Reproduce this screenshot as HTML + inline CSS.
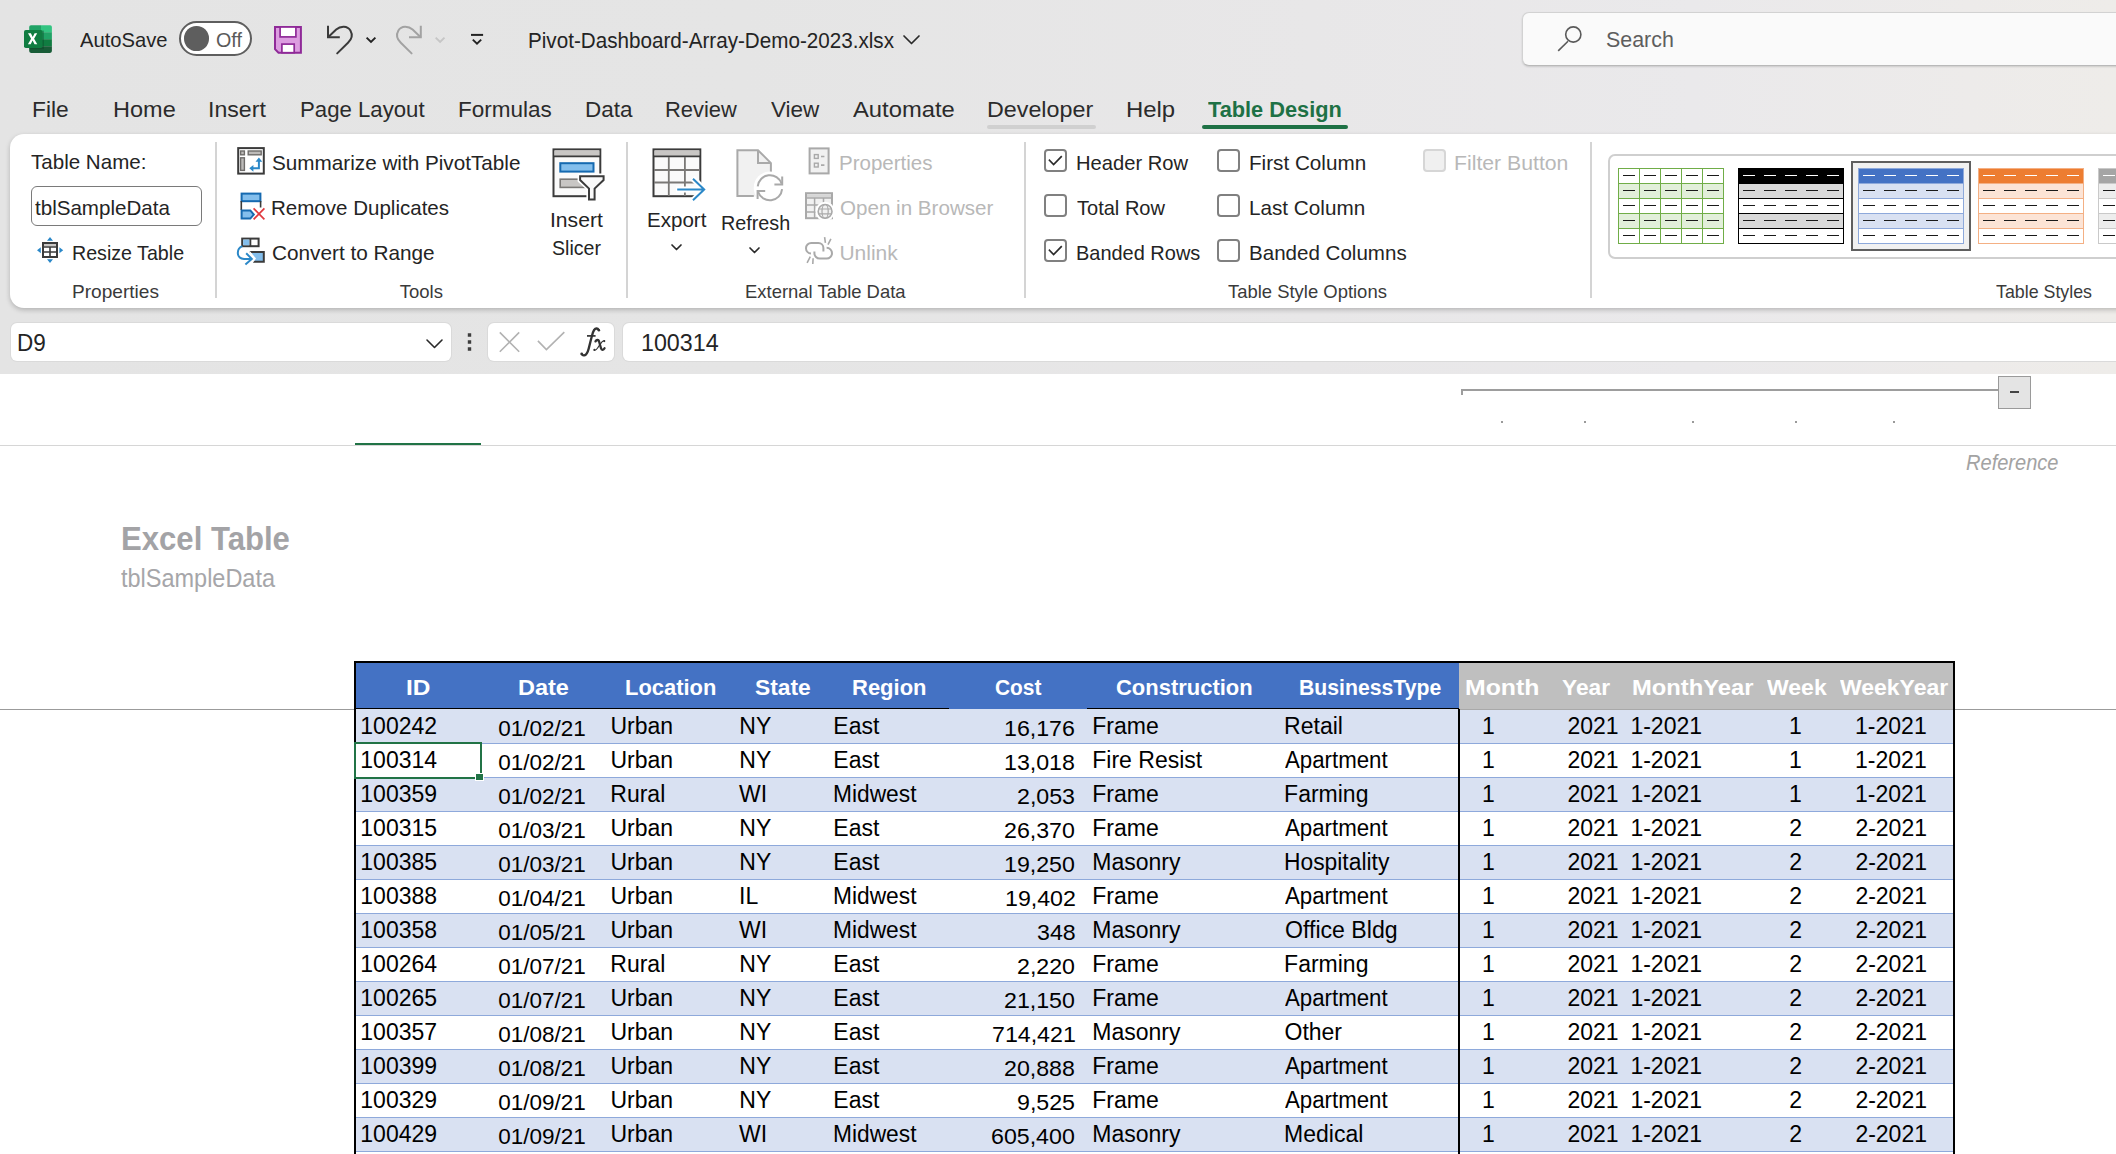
<!DOCTYPE html>
<html>
<head>
<meta charset="utf-8">
<title>Pivot-Dashboard-Array-Demo-2023.xlsx - Excel</title>
<style>
html,body{margin:0;padding:0;}
body{width:2116px;height:1154px;overflow:hidden;position:relative;background:#fff;font-family:"Liberation Sans",sans-serif;}
.a{position:absolute;}
.t{position:absolute;white-space:nowrap;transform-origin:0 0;font-family:"Liberation Sans",sans-serif;}
svg{position:absolute;overflow:visible;}
.sep{position:absolute;top:142px;height:156px;width:2px;background:#d4d4d4;}
.cb{position:absolute;width:19px;height:19px;border:2px solid #808080;border-radius:4px;background:#fff;}
.cbd{position:absolute;width:19px;height:19px;border:2px solid #d6d6d6;border-radius:4px;background:#f0f0f0;}
.band{position:absolute;left:356px;width:1597px;height:33px;background:#d9e1f2;}
.rl{position:absolute;left:356px;width:1597px;height:1px;background:#8ea9db;}
</style>
</head>
<body>
<div class="a" style="left:0;top:0;width:2116px;height:374px;background:linear-gradient(90deg,#e4e4e4 0%,#e5e5e5 35%,#e8e7e8 62%,#eae9eb 80%,#edebea 93%,#eeece9 100%);"></div><svg style="left:24px;top:25px" width="28" height="28" viewBox="0 0 28 28">
<defs><clipPath id="lg"><rect x="5.2" y="0.2" width="22.7" height="27.7" rx="1.8"/></clipPath></defs>
<g clip-path="url(#lg)">
<rect x="5" y="0" width="12" height="7.2" fill="#21a366"/><rect x="17" y="0" width="11" height="7.2" fill="#33c481"/>
<rect x="5" y="7.2" width="12" height="7" fill="#107c41"/><rect x="17" y="7.2" width="11" height="7" fill="#21a366"/>
<rect x="5" y="14.2" width="12" height="7" fill="#185c37"/><rect x="17" y="14.2" width="11" height="7" fill="#107c41"/>
<rect x="5" y="21.2" width="23" height="7" fill="#185c37"/>
<rect x="5" y="5.6" width="15" height="18.6" fill="#0a3d22" opacity="0.35"/>
</g>
<rect x="0" y="5" width="18.5" height="18" rx="1.8" fill="#107c41"/>
<path d="M4 8.2 L6.9 8.2 L8.7 11.9 L10.6 8.2 L13.2 8.2 L10.1 13.7 L13.3 19.3 L10.5 19.3 L8.6 15.5 L6.7 19.3 L3.9 19.3 L7.1 13.7 Z" fill="#fff"/>
</svg><div class="t" style="left:80.40px;top:29px;font-size:21px;line-height:21px;color:#242424;transform:scaleX(0.9602);">AutoSave</div><div class="a" style="left:179px;top:21px;width:69px;height:31px;border:2px solid #5e5e5e;border-radius:18px;background:#fff;"></div><div class="a" style="left:184.1px;top:26.2px;width:24.6px;height:24.6px;border-radius:50%;background:#5e5e5e;"></div><div class="t" style="left:215.91px;top:30px;font-size:20px;line-height:20px;color:#5a5a5a;transform:scaleX(0.9862);">Off</div><svg style="left:270px;top:22px" width="36" height="36" viewBox="270 22 36 36">
<path d="M275 27 H300.9 V52.7 H278.5 L275 49.1 Z" fill="#dc9de0" stroke="#8f2a98" stroke-width="2" stroke-linejoin="miter"/>
<rect x="280.1" y="27" width="15.8" height="9.9" fill="#fff" stroke="#8f2a98" stroke-width="1.7"/>
<rect x="281.9" y="44.1" width="12.3" height="8.6" fill="#fff" stroke="#8f2a98" stroke-width="1.7"/>
</svg><svg style="left:320px;top:20px" width="170" height="40" viewBox="320 20 170 40" fill="none" stroke-linecap="butt" stroke-linejoin="miter">
<g stroke="#3a3a3a" stroke-width="2"><path d="M328 25.8 V37.3 H339.8"/><path d="M328.6 36.7 L336.2 29.6 C340.5 25.6 347.5 25.6 350.4 30.4 C352.8 34.6 351.4 39.4 348 42.7 L337.2 53.4" stroke-linecap="round"/></g>
<path d="M366.6 37.6 L371 42 L375.4 37.6" stroke="#222" stroke-width="1.9"/>
<g stroke="#a2a2a2" stroke-width="2"><path d="M420.8 25.8 V37.3 H409"/><path d="M420.2 36.7 L412.6 29.6 C408.3 25.6 401.3 25.6 398.4 30.4 C396 34.6 397.4 39.4 400.8 42.7 L411.6 53.4" stroke-linecap="round"/></g>
<path d="M435.7 37.6 L440.1 42 L444.5 37.6" stroke="#c6c6c6" stroke-width="1.9"/>
<path d="M471 34.9 H483.1" stroke="#222" stroke-width="2"/><path d="M472.8 39.6 L477 43.6 L481.2 39.6" stroke="#222" stroke-width="1.9"/>
</svg><div class="t" style="left:528.17px;top:31px;font-size:21.5px;line-height:21.5px;color:#242424;transform:scaleX(0.9602);">Pivot-Dashboard-Array-Demo-2023.xlsx</div><svg style="left:903px;top:35px" width="17" height="10" viewBox="0 0 17 10" fill="none" stroke="#2a2a2a" stroke-width="1.7" stroke-linecap="round" stroke-linejoin="round"><path d="M1 1 L8.5 8.5 L16 1"/></svg><div class="a" style="left:1522px;top:12px;width:640px;height:52px;border-radius:7px;background:#fafafa;border:1px solid #d2d2d2;border-bottom-color:#b9b9b9;box-shadow:0 1px 2px rgba(0,0,0,0.14);"></div><svg style="left:1550px;top:20px" width="36" height="36" viewBox="1550 20 36 36" fill="none" stroke="#5a5a5a" stroke-width="1.6" stroke-linecap="butt"><circle cx="1573.3" cy="34.5" r="7.6"/><path d="M1568 41.3 L1558.2 50.9"/></svg><div class="t" style="left:1606.02px;top:29px;font-size:22px;line-height:22px;color:#5e5e5e;transform:scaleX(0.9723);">Search</div><div class="t" style="left:31.84px;top:99px;font-size:22px;line-height:22px;color:#2b2b2b;transform:scaleX(1.0332);">File</div><div class="t" style="left:112.58px;top:99px;font-size:22px;line-height:22px;color:#2b2b2b;transform:scaleX(1.0688);">Home</div><div class="t" style="left:207.60px;top:99px;font-size:22px;line-height:22px;color:#2b2b2b;transform:scaleX(1.0509);">Insert</div><div class="t" style="left:299.88px;top:99px;font-size:22px;line-height:22px;color:#2b2b2b;transform:scaleX(1.0088);">Page Layout</div><div class="t" style="left:457.96px;top:99px;font-size:22px;line-height:22px;color:#2b2b2b;transform:scaleX(1.0226);">Formulas</div><div class="t" style="left:584.96px;top:99px;font-size:22px;line-height:22px;color:#2b2b2b;transform:scaleX(1.0216);">Data</div><div class="t" style="left:665.41px;top:99px;font-size:22px;line-height:22px;color:#2b2b2b;transform:scaleX(0.9951);">Review</div><div class="t" style="left:771.00px;top:99px;font-size:22px;line-height:22px;color:#2b2b2b;transform:scaleX(1.0211);">View</div><div class="t" style="left:853.00px;top:99px;font-size:22px;line-height:22px;color:#2b2b2b;transform:scaleX(1.0801);">Automate</div><div class="t" style="left:987.49px;top:99px;font-size:22px;line-height:22px;color:#2b2b2b;transform:scaleX(1.0586);">Developer</div><div class="t" style="left:1125.74px;top:99px;font-size:22px;line-height:22px;color:#2b2b2b;transform:scaleX(1.0866);">Help</div><div class="t" style="left:1208.20px;top:99px;font-size:22px;line-height:22px;color:#1e7145;font-weight:bold;transform:scaleX(0.9892);">Table Design</div><div class="a" style="left:987px;top:125px;width:109px;height:3.6px;border-radius:2px;background:#d0d0d0;"></div><div class="a" style="left:1202px;top:125px;width:146px;height:3.7px;border-radius:2px;background:#1e7145;"></div><div class="a" style="left:10px;top:134px;width:2200px;height:174px;border-radius:14px;background:#fff;box-shadow:0 2px 5px rgba(0,0,0,0.22);"></div><div class="sep" style="left:214.5px"></div><div class="sep" style="left:625.5px"></div><div class="sep" style="left:1023.5px"></div><div class="sep" style="left:1589.5px"></div><div class="t" style="left:30.91px;top:151px;font-size:21px;line-height:21px;color:#242424;transform:scaleX(0.9788);">Table Name:</div><div class="a" style="left:31px;top:186px;width:169px;height:38px;border:1.5px solid #7a7a7a;border-radius:6px;background:#fff;"></div><div class="t" style="left:35.31px;top:197px;font-size:21px;line-height:21px;color:#242424;transform:scaleX(0.9792);">tblSampleData</div><div class="t" style="left:71.81px;top:242px;font-size:21px;line-height:21px;color:#242424;transform:scaleX(0.9350);">Resize Table</div><div class="t" style="left:72.45px;top:283px;font-size:18.5px;line-height:18.5px;color:#3a3a3a;transform:scaleX(1.0308);">Properties</div><div class="t" style="left:271.71px;top:152px;font-size:21px;line-height:21px;color:#242424;transform:scaleX(0.9856);">Summarize with PivotTable</div><div class="t" style="left:270.94px;top:197px;font-size:21px;line-height:21px;color:#242424;transform:scaleX(0.9779);">Remove Duplicates</div><div class="t" style="left:271.61px;top:242px;font-size:21px;line-height:21px;color:#242424;transform:scaleX(0.9882);">Convert to Range</div><div class="t" style="left:399.80px;top:283px;font-size:18.5px;line-height:18.5px;color:#3a3a3a;">Tools</div><div class="t" style="left:550.39px;top:209px;font-size:21px;line-height:21px;color:#242424;transform:scaleX(1.0062);">Insert</div><div class="t" style="left:551.86px;top:237px;font-size:21px;line-height:21px;color:#242424;transform:scaleX(0.9315);">Slicer</div><div class="t" style="left:647.04px;top:209px;font-size:21px;line-height:21px;color:#242424;transform:scaleX(0.9786);">Export</div><div class="t" style="left:721.00px;top:212px;font-size:21px;line-height:21px;color:#242424;transform:scaleX(0.9412);">Refresh</div><div class="t" style="left:839.34px;top:152px;font-size:21px;line-height:21px;color:#b8b8b8;transform:scaleX(0.9774);">Properties</div><div class="t" style="left:840.12px;top:197px;font-size:21px;line-height:21px;color:#b8b8b8;transform:scaleX(0.9806);">Open in Browser</div><div class="t" style="left:839.40px;top:242px;font-size:21px;line-height:21px;color:#b8b8b8;">Unlink</div><div class="t" style="left:744.51px;top:283px;font-size:18.5px;line-height:18.5px;color:#3a3a3a;transform:scaleX(0.9965);">External Table Data</div><div class="t" style="left:1075.57px;top:152px;font-size:21px;line-height:21px;color:#242424;transform:scaleX(0.9596);">Header Row</div><div class="t" style="left:1076.82px;top:197px;font-size:21px;line-height:21px;color:#242424;transform:scaleX(0.9539);">Total Row</div><div class="t" style="left:1075.58px;top:242px;font-size:21px;line-height:21px;color:#242424;transform:scaleX(0.9505);">Banded Rows</div><div class="t" style="left:1248.53px;top:152px;font-size:21px;line-height:21px;color:#242424;transform:scaleX(0.9842);">First Column</div><div class="t" style="left:1248.53px;top:197px;font-size:21px;line-height:21px;color:#242424;transform:scaleX(0.9851);">Last Column</div><div class="t" style="left:1248.54px;top:242px;font-size:21px;line-height:21px;color:#242424;transform:scaleX(0.9786);">Banded Columns</div><div class="t" style="left:1228.00px;top:283px;font-size:18.5px;line-height:18.5px;color:#3a3a3a;transform:scaleX(0.9966);">Table Style Options</div><div class="t" style="left:1454.28px;top:152px;font-size:21px;line-height:21px;color:#b8b8b8;transform:scaleX(1.0106);">Filter Button</div><div class="t" style="left:1996.31px;top:283px;font-size:18.5px;line-height:18.5px;color:#3a3a3a;transform:scaleX(0.9626);">Table Styles</div><div class="cb" style="left:1044px;top:149px"></div><svg style="left:1044px;top:149px" width="23" height="23" viewBox="0 0 23 23" fill="none" stroke="#2b2b2b" stroke-width="1.7" stroke-linecap="square" stroke-linejoin="miter"><path d="M5.5 11.3 L9.6 15.5 L17.2 7.7"/></svg><div class="cb" style="left:1044px;top:194px"></div><div class="cb" style="left:1044px;top:239px"></div><svg style="left:1044px;top:239px" width="23" height="23" viewBox="0 0 23 23" fill="none" stroke="#2b2b2b" stroke-width="1.7" stroke-linecap="square" stroke-linejoin="miter"><path d="M5.5 11.3 L9.6 15.5 L17.2 7.7"/></svg><div class="cb" style="left:1217px;top:149px"></div><div class="cb" style="left:1217px;top:194px"></div><div class="cb" style="left:1217px;top:239px"></div><div class="cbd" style="left:1423px;top:149px"></div><svg style="left:671px;top:244px" width="11" height="7" viewBox="0 0 11 7" fill="none" stroke="#2a2a2a" stroke-width="1.7" stroke-linecap="round" stroke-linejoin="round"><path d="M1 1 L5.5 5.5 L10 1"/></svg><svg style="left:749px;top:246.5px" width="11" height="7" viewBox="0 0 11 7" fill="none" stroke="#2a2a2a" stroke-width="1.7" stroke-linecap="round" stroke-linejoin="round"><path d="M1 1 L5.5 5.5 L10 1"/></svg><svg style="left:0;top:130px" width="1100" height="150" viewBox="0 130 1100 150" fill="none"><rect x="43" y="243" width="14" height="14" fill="#fff" stroke="#3b3b3b" stroke-width="2"/><rect x="44" y="244" width="12" height="2.2" fill="#c8c6c4"/><path d="M43 247 H57 M43 252 H57 M50 247 V257" stroke="#3b3b3b" stroke-width="1.6"/><path d="M50 237 L53 240.7 H47 Z M50 263 L53 259.3 H47 Z M37 250.2 L40.8 247.2 V253.2 Z M63.2 250.2 L59.4 247.2 V253.2 Z" fill="#2b88c8"/><rect x="238.2" y="148.1" width="25.6" height="25.5" fill="#fff" stroke="#3b3b3b" stroke-width="2"/><rect x="240.6" y="151" width="3.8" height="3.8" fill="#bdbbb9" stroke="#6e6c6a" stroke-width="1.4"/><rect x="248.2" y="151" width="13" height="3.8" fill="#bdbbb9" stroke="#6e6c6a" stroke-width="1.4"/><rect x="240.6" y="157.8" width="3.8" height="12.6" fill="#bdbbb9" stroke="#6e6c6a" stroke-width="1.4"/><path d="M251.5 168.3 H258.9 V160" stroke="#2b88c8" stroke-width="2"/><path d="M253.4 164.9 L249.3 168.3 L253.4 171.7 Z M255.5 161.8 L258.9 157.6 L262.3 161.8 Z" fill="#2b88c8"/><rect x="241.6" y="193.6" width="18.8" height="7.6" fill="#83beec" stroke="#1569b0" stroke-width="2"/><path d="M241.3 201 V210 M260.6 201 V207.5" stroke="#3b3b3b" stroke-width="1.6"/><path d="M241.6 210.4 H250.3 L253.8 214.6 L250.3 218.6 H241.6 Z" fill="#83beec" stroke="#1569b0" stroke-width="2"/><path d="M253.6 208.4 L264.4 219.4 M264.4 208.4 L253.6 219.4" stroke="#e0393e" stroke-width="1.7"/><rect x="242.2" y="238.6" width="16.4" height="7.6" fill="#fff" stroke="#3b3b3b" stroke-width="2"/><rect x="243.2" y="239.6" width="6.3" height="5.6" fill="#83beec"/><path d="M250.4 238.6 V246.2" stroke="#3b3b3b" stroke-width="1.8"/><path d="M251.2 252 H263.8 V261.8 H254" fill="#83beec"/><path d="M249.8 252 H263.8 V261.8 H253" stroke="#3b3b3b" stroke-width="2" /><path d="M249.8 251 L256 258.5 L253 262.8 L249.8 262.8Z" fill="#fff"/><path d="M242.3 246.2 C236 249 236.2 258.6 244 258.9 H251" stroke="#2b88c8" stroke-width="2"/><path d="M246.2 253.3 L251.8 258.9 L245.4 264.4" stroke="#2b88c8" stroke-width="2"/><rect x="553.5" y="149.4" width="46.8" height="46.8" fill="#fafafa" stroke="#3b3b3b" stroke-width="2"/><rect x="554.5" y="150.4" width="44.8" height="5.6" fill="#c8c6c4"/><path d="M553.5 156.4 H600.3" stroke="#3b3b3b" stroke-width="1.8"/><rect x="560.3" y="163.2" width="33.2" height="8.4" fill="#83beec" stroke="#1569b0" stroke-width="2"/><rect x="560.2" y="179.2" width="26" height="8.2" fill="#c8c6c4" stroke="#7a7876" stroke-width="1.6"/><path d="M577.6 173.4 H606.4 V181.4 L597.4 189.4 V202.4 H586.4 V189.4 L577.6 181.4 Z" fill="#fff"/><rect x="596" y="186" width="7" height="13" fill="#fff"/><path d="M580.1 176.2 H603.6 V180 L594.6 188.6 V199.5 H589 V188.6 L580.1 180 Z" fill="#fafafa" stroke="#3b3b3b" stroke-width="2"/><rect x="653.5" y="149.4" width="46.8" height="46.8" fill="#fafafa" stroke="#3b3b3b" stroke-width="2"/><rect x="654.5" y="150.4" width="44.8" height="5.4" fill="#c8c6c4"/><path d="M653.5 156.3 H700.3" stroke="#3b3b3b" stroke-width="1.8"/><path d="M668.8 157 V196 M684.9 157 V196 M654 170 H700 M654 182.5 H700" stroke="#7a7876" stroke-width="1.8"/><path d="M676 189.6 H705.5 M692.4 178 L704.4 189.6 L692.4 201" stroke="#fff" stroke-width="6"/><rect x="696" y="186" width="12" height="14" fill="#fff"/><path d="M677.2 189.6 H703.8 M693 178.8 L704.2 189.6 L693 200.2" stroke="#2b88c8" stroke-width="2"/><path d="M737.4 150.2 H758 L770.9 163.1 V196.6 H737.4 Z" fill="#f1f1f1"/><path d="M753.8 196.1 H737.4 V150.2 H758 L770.9 163.1 V172" stroke="#a9a9a9" stroke-width="2"/><path d="M758 150.2 V163.1 H770.9" stroke="#a9a9a9" stroke-width="2"/><circle cx="769.9" cy="187.8" r="16.2" fill="#fff"/><path d="M757.7 186.4 A12.3 12.3 0 0 1 781.6 183.6" stroke="#a9a9a9" stroke-width="2"/><path d="M782.2 176.4 V184.4 H774.4" stroke="#a9a9a9" stroke-width="2"/><path d="M782.1 189.2 A12.3 12.3 0 0 1 758.2 192" stroke="#a9a9a9" stroke-width="2"/><path d="M757.6 198.9 V191.1 H765.2" stroke="#a9a9a9" stroke-width="2"/><rect x="809.6" y="148.4" width="19" height="25" fill="#f1f1f1" stroke="#a9a9a9" stroke-width="2"/><rect x="814.4" y="154.6" width="3.8" height="3.8" stroke="#a9a9a9" stroke-width="1.4"/><rect x="814.4" y="163.2" width="3.8" height="3.8" stroke="#a9a9a9" stroke-width="1.4"/><path d="M821 156.5 H824.4 M821 165.1 H824.4" stroke="#a9a9a9" stroke-width="1.6"/><rect x="806" y="193.2" width="26" height="25" fill="#f1f1f1" stroke="#a9a9a9" stroke-width="2"/><rect x="807" y="194.2" width="24" height="3.4" fill="#d6d6d6"/><path d="M806 198 H832 M814.6 198 V218 M806 205.1 H832 M806 212 H832 M823.5 198 V203" stroke="#a9a9a9" stroke-width="1.5"/><circle cx="825.1" cy="211.4" r="9.6" fill="#fff"/><circle cx="825.1" cy="211.4" r="6.9" fill="#f1f1f1" stroke="#a9a9a9" stroke-width="1.6"/><ellipse cx="825.1" cy="211.4" rx="3.1" ry="6.9" stroke="#a9a9a9" stroke-width="1.2"/><path d="M818.4 209 H831.8 M818.4 213.8 H831.8" stroke="#a9a9a9" stroke-width="1.2"/><path d="M823.4 251.6 V248 A5 5 0 0 0 818.4 243 H811.2 A5.2 5.2 0 0 0 806 248.2 A5.2 5.2 0 0 0 811 253.4" stroke="#a9a9a9" stroke-width="2"/><path d="M826.6 247.8 A5.4 5.4 0 0 1 826.6 258.6 H819.8 A5.4 5.4 0 0 1 814.4 253.2 V251.4" stroke="#a9a9a9" stroke-width="2"/><path d="M824.6 237.2 L825.4 242.9 M830.9 238.9 L828 244.6 M810.3 256.6 L807.1 262.9 M813.1 258.3 L812.8 264" stroke="#a9a9a9" stroke-width="1.6"/></svg><div class="a" style="left:1608px;top:154px;width:560px;height:100.6px;border:2px solid #cfcfcf;border-radius:7px;background:#fff;"></div><svg style="left:1618px;top:168px" width="106" height="76" viewBox="0 0 106 76" shape-rendering="crispEdges"><rect x="0" y="0" width="106" height="15" fill="#fff"/><rect x="0" y="15" width="106" height="15" fill="#e2efda"/><rect x="0" y="30" width="106" height="15" fill="#fff"/><rect x="0" y="45" width="106" height="15" fill="#e2efda"/><rect x="0" y="60" width="106" height="15" fill="#fff"/><rect x="0" y="0" width="106" height="1" fill="#70ad47"/><rect x="0" y="15" width="106" height="1" fill="#70ad47"/><rect x="0" y="30" width="106" height="1" fill="#70ad47"/><rect x="0" y="45" width="106" height="1" fill="#70ad47"/><rect x="0" y="60" width="106" height="1" fill="#70ad47"/><rect x="0" y="75" width="106" height="1" fill="#70ad47"/><rect x="0" y="0" width="1" height="76" fill="#70ad47"/><rect x="21" y="0" width="1" height="76" fill="#70ad47"/><rect x="42" y="0" width="1" height="76" fill="#70ad47"/><rect x="63" y="0" width="1" height="76" fill="#70ad47"/><rect x="84" y="0" width="1" height="76" fill="#70ad47"/><rect x="105" y="0" width="1" height="76" fill="#70ad47"/><rect x="5" y="7" width="12" height="1" fill="#1a1a1a"/><rect x="26" y="7" width="12" height="1" fill="#1a1a1a"/><rect x="47" y="7" width="12" height="1" fill="#1a1a1a"/><rect x="68" y="7" width="12" height="1" fill="#1a1a1a"/><rect x="89" y="7" width="12" height="1" fill="#1a1a1a"/><rect x="5" y="22" width="12" height="1" fill="#1a1a1a"/><rect x="26" y="22" width="12" height="1" fill="#1a1a1a"/><rect x="47" y="22" width="12" height="1" fill="#1a1a1a"/><rect x="68" y="22" width="12" height="1" fill="#1a1a1a"/><rect x="89" y="22" width="12" height="1" fill="#1a1a1a"/><rect x="5" y="37" width="12" height="1" fill="#1a1a1a"/><rect x="26" y="37" width="12" height="1" fill="#1a1a1a"/><rect x="47" y="37" width="12" height="1" fill="#1a1a1a"/><rect x="68" y="37" width="12" height="1" fill="#1a1a1a"/><rect x="89" y="37" width="12" height="1" fill="#1a1a1a"/><rect x="5" y="52" width="12" height="1" fill="#1a1a1a"/><rect x="26" y="52" width="12" height="1" fill="#1a1a1a"/><rect x="47" y="52" width="12" height="1" fill="#1a1a1a"/><rect x="68" y="52" width="12" height="1" fill="#1a1a1a"/><rect x="89" y="52" width="12" height="1" fill="#1a1a1a"/><rect x="5" y="67" width="12" height="1" fill="#1a1a1a"/><rect x="26" y="67" width="12" height="1" fill="#1a1a1a"/><rect x="47" y="67" width="12" height="1" fill="#1a1a1a"/><rect x="68" y="67" width="12" height="1" fill="#1a1a1a"/><rect x="89" y="67" width="12" height="1" fill="#1a1a1a"/></svg><svg style="left:1738px;top:168px" width="106" height="76" viewBox="0 0 106 76" shape-rendering="crispEdges"><rect x="0" y="0" width="106" height="15" fill="#000"/><rect x="0" y="15" width="106" height="15" fill="#d9d9d9"/><rect x="0" y="30" width="106" height="15" fill="#fff"/><rect x="0" y="45" width="106" height="15" fill="#d9d9d9"/><rect x="0" y="60" width="106" height="15" fill="#fff"/><rect x="0" y="0" width="106" height="1" fill="#000"/><rect x="0" y="15" width="106" height="1" fill="#000"/><rect x="0" y="30" width="106" height="1" fill="#000"/><rect x="0" y="45" width="106" height="1" fill="#000"/><rect x="0" y="60" width="106" height="1" fill="#000"/><rect x="0" y="75" width="106" height="1" fill="#000"/><rect x="0" y="0" width="1" height="76" fill="#000"/><rect x="105" y="0" width="1" height="76" fill="#000"/><rect x="5" y="7" width="12" height="1" fill="#fff"/><rect x="26" y="7" width="12" height="1" fill="#fff"/><rect x="47" y="7" width="12" height="1" fill="#fff"/><rect x="68" y="7" width="12" height="1" fill="#fff"/><rect x="89" y="7" width="12" height="1" fill="#fff"/><rect x="5" y="22" width="12" height="1" fill="#1a1a1a"/><rect x="26" y="22" width="12" height="1" fill="#1a1a1a"/><rect x="47" y="22" width="12" height="1" fill="#1a1a1a"/><rect x="68" y="22" width="12" height="1" fill="#1a1a1a"/><rect x="89" y="22" width="12" height="1" fill="#1a1a1a"/><rect x="5" y="37" width="12" height="1" fill="#1a1a1a"/><rect x="26" y="37" width="12" height="1" fill="#1a1a1a"/><rect x="47" y="37" width="12" height="1" fill="#1a1a1a"/><rect x="68" y="37" width="12" height="1" fill="#1a1a1a"/><rect x="89" y="37" width="12" height="1" fill="#1a1a1a"/><rect x="5" y="52" width="12" height="1" fill="#1a1a1a"/><rect x="26" y="52" width="12" height="1" fill="#1a1a1a"/><rect x="47" y="52" width="12" height="1" fill="#1a1a1a"/><rect x="68" y="52" width="12" height="1" fill="#1a1a1a"/><rect x="89" y="52" width="12" height="1" fill="#1a1a1a"/><rect x="5" y="67" width="12" height="1" fill="#1a1a1a"/><rect x="26" y="67" width="12" height="1" fill="#1a1a1a"/><rect x="47" y="67" width="12" height="1" fill="#1a1a1a"/><rect x="68" y="67" width="12" height="1" fill="#1a1a1a"/><rect x="89" y="67" width="12" height="1" fill="#1a1a1a"/></svg><div class="a" style="left:1851px;top:161px;width:116px;height:85.5px;border:2px solid #5f5f5f;background:#f1f1f1;"></div><svg style="left:1858px;top:168px" width="106" height="76" viewBox="0 0 106 76" shape-rendering="crispEdges"><rect x="0" y="0" width="106" height="15" fill="#4472c4"/><rect x="0" y="15" width="106" height="15" fill="#d9e1f2"/><rect x="0" y="30" width="106" height="15" fill="#fff"/><rect x="0" y="45" width="106" height="15" fill="#d9e1f2"/><rect x="0" y="60" width="106" height="15" fill="#fff"/><rect x="0" y="0" width="106" height="1" fill="#8ea9db"/><rect x="0" y="15" width="106" height="1" fill="#8ea9db"/><rect x="0" y="30" width="106" height="1" fill="#8ea9db"/><rect x="0" y="45" width="106" height="1" fill="#8ea9db"/><rect x="0" y="60" width="106" height="1" fill="#8ea9db"/><rect x="0" y="75" width="106" height="1" fill="#8ea9db"/><rect x="0" y="0" width="1" height="76" fill="#8ea9db"/><rect x="105" y="0" width="1" height="76" fill="#8ea9db"/><rect x="5" y="7" width="12" height="1" fill="#fff"/><rect x="26" y="7" width="12" height="1" fill="#fff"/><rect x="47" y="7" width="12" height="1" fill="#fff"/><rect x="68" y="7" width="12" height="1" fill="#fff"/><rect x="89" y="7" width="12" height="1" fill="#fff"/><rect x="5" y="22" width="12" height="1" fill="#1a1a1a"/><rect x="26" y="22" width="12" height="1" fill="#1a1a1a"/><rect x="47" y="22" width="12" height="1" fill="#1a1a1a"/><rect x="68" y="22" width="12" height="1" fill="#1a1a1a"/><rect x="89" y="22" width="12" height="1" fill="#1a1a1a"/><rect x="5" y="37" width="12" height="1" fill="#1a1a1a"/><rect x="26" y="37" width="12" height="1" fill="#1a1a1a"/><rect x="47" y="37" width="12" height="1" fill="#1a1a1a"/><rect x="68" y="37" width="12" height="1" fill="#1a1a1a"/><rect x="89" y="37" width="12" height="1" fill="#1a1a1a"/><rect x="5" y="52" width="12" height="1" fill="#1a1a1a"/><rect x="26" y="52" width="12" height="1" fill="#1a1a1a"/><rect x="47" y="52" width="12" height="1" fill="#1a1a1a"/><rect x="68" y="52" width="12" height="1" fill="#1a1a1a"/><rect x="89" y="52" width="12" height="1" fill="#1a1a1a"/><rect x="5" y="67" width="12" height="1" fill="#1a1a1a"/><rect x="26" y="67" width="12" height="1" fill="#1a1a1a"/><rect x="47" y="67" width="12" height="1" fill="#1a1a1a"/><rect x="68" y="67" width="12" height="1" fill="#1a1a1a"/><rect x="89" y="67" width="12" height="1" fill="#1a1a1a"/></svg><svg style="left:1978px;top:168px" width="106" height="76" viewBox="0 0 106 76" shape-rendering="crispEdges"><rect x="0" y="0" width="106" height="15" fill="#ed7d31"/><rect x="0" y="15" width="106" height="15" fill="#fce4d6"/><rect x="0" y="30" width="106" height="15" fill="#fff"/><rect x="0" y="45" width="106" height="15" fill="#fce4d6"/><rect x="0" y="60" width="106" height="15" fill="#fff"/><rect x="0" y="0" width="106" height="1" fill="#f4b084"/><rect x="0" y="15" width="106" height="1" fill="#f4b084"/><rect x="0" y="30" width="106" height="1" fill="#f4b084"/><rect x="0" y="45" width="106" height="1" fill="#f4b084"/><rect x="0" y="60" width="106" height="1" fill="#f4b084"/><rect x="0" y="75" width="106" height="1" fill="#f4b084"/><rect x="0" y="0" width="1" height="76" fill="#f4b084"/><rect x="105" y="0" width="1" height="76" fill="#f4b084"/><rect x="5" y="7" width="12" height="1" fill="#fff"/><rect x="26" y="7" width="12" height="1" fill="#fff"/><rect x="47" y="7" width="12" height="1" fill="#fff"/><rect x="68" y="7" width="12" height="1" fill="#fff"/><rect x="89" y="7" width="12" height="1" fill="#fff"/><rect x="5" y="22" width="12" height="1" fill="#1a1a1a"/><rect x="26" y="22" width="12" height="1" fill="#1a1a1a"/><rect x="47" y="22" width="12" height="1" fill="#1a1a1a"/><rect x="68" y="22" width="12" height="1" fill="#1a1a1a"/><rect x="89" y="22" width="12" height="1" fill="#1a1a1a"/><rect x="5" y="37" width="12" height="1" fill="#1a1a1a"/><rect x="26" y="37" width="12" height="1" fill="#1a1a1a"/><rect x="47" y="37" width="12" height="1" fill="#1a1a1a"/><rect x="68" y="37" width="12" height="1" fill="#1a1a1a"/><rect x="89" y="37" width="12" height="1" fill="#1a1a1a"/><rect x="5" y="52" width="12" height="1" fill="#1a1a1a"/><rect x="26" y="52" width="12" height="1" fill="#1a1a1a"/><rect x="47" y="52" width="12" height="1" fill="#1a1a1a"/><rect x="68" y="52" width="12" height="1" fill="#1a1a1a"/><rect x="89" y="52" width="12" height="1" fill="#1a1a1a"/><rect x="5" y="67" width="12" height="1" fill="#1a1a1a"/><rect x="26" y="67" width="12" height="1" fill="#1a1a1a"/><rect x="47" y="67" width="12" height="1" fill="#1a1a1a"/><rect x="68" y="67" width="12" height="1" fill="#1a1a1a"/><rect x="89" y="67" width="12" height="1" fill="#1a1a1a"/></svg><svg style="left:2098px;top:168px" width="106" height="76" viewBox="0 0 106 76" shape-rendering="crispEdges"><rect x="0" y="0" width="106" height="15" fill="#a5a5a5"/><rect x="0" y="15" width="106" height="15" fill="#ededed"/><rect x="0" y="30" width="106" height="15" fill="#fff"/><rect x="0" y="45" width="106" height="15" fill="#ededed"/><rect x="0" y="60" width="106" height="15" fill="#fff"/><rect x="0" y="0" width="106" height="1" fill="#c9c9c9"/><rect x="0" y="15" width="106" height="1" fill="#c9c9c9"/><rect x="0" y="30" width="106" height="1" fill="#c9c9c9"/><rect x="0" y="45" width="106" height="1" fill="#c9c9c9"/><rect x="0" y="60" width="106" height="1" fill="#c9c9c9"/><rect x="0" y="75" width="106" height="1" fill="#c9c9c9"/><rect x="0" y="0" width="1" height="76" fill="#c9c9c9"/><rect x="105" y="0" width="1" height="76" fill="#c9c9c9"/><rect x="5" y="7" width="12" height="1" fill="#fff"/><rect x="26" y="7" width="12" height="1" fill="#fff"/><rect x="47" y="7" width="12" height="1" fill="#fff"/><rect x="68" y="7" width="12" height="1" fill="#fff"/><rect x="89" y="7" width="12" height="1" fill="#fff"/><rect x="5" y="22" width="12" height="1" fill="#1a1a1a"/><rect x="26" y="22" width="12" height="1" fill="#1a1a1a"/><rect x="47" y="22" width="12" height="1" fill="#1a1a1a"/><rect x="68" y="22" width="12" height="1" fill="#1a1a1a"/><rect x="89" y="22" width="12" height="1" fill="#1a1a1a"/><rect x="5" y="37" width="12" height="1" fill="#1a1a1a"/><rect x="26" y="37" width="12" height="1" fill="#1a1a1a"/><rect x="47" y="37" width="12" height="1" fill="#1a1a1a"/><rect x="68" y="37" width="12" height="1" fill="#1a1a1a"/><rect x="89" y="37" width="12" height="1" fill="#1a1a1a"/><rect x="5" y="52" width="12" height="1" fill="#1a1a1a"/><rect x="26" y="52" width="12" height="1" fill="#1a1a1a"/><rect x="47" y="52" width="12" height="1" fill="#1a1a1a"/><rect x="68" y="52" width="12" height="1" fill="#1a1a1a"/><rect x="89" y="52" width="12" height="1" fill="#1a1a1a"/><rect x="5" y="67" width="12" height="1" fill="#1a1a1a"/><rect x="26" y="67" width="12" height="1" fill="#1a1a1a"/><rect x="47" y="67" width="12" height="1" fill="#1a1a1a"/><rect x="68" y="67" width="12" height="1" fill="#1a1a1a"/><rect x="89" y="67" width="12" height="1" fill="#1a1a1a"/></svg><div class="a" style="left:11px;top:323px;width:440px;height:38px;border-radius:6px;background:#fff;box-shadow:0 0 0 1px #dadada;"></div><div class="t" style="left:17.34px;top:332px;font-size:23px;line-height:23px;color:#242424;transform:scaleX(0.9771);">D9</div><svg style="left:426px;top:339px" width="17" height="10" viewBox="0 0 17 10" fill="none" stroke="#2a2a2a" stroke-width="1.6" stroke-linecap="round" stroke-linejoin="round"><path d="M1 1 L8.5 8.5 L16 1"/></svg><svg style="left:460px;top:325px" width="20" height="34" viewBox="460 325 20 34"><path d="M467.8 333.3h3.4v3.4h-3.4z M467.8 340.3h3.4v3.4h-3.4z M467.8 347.3h3.4v3.4h-3.4z" fill="#3d3d3d"/></svg><div class="a" style="left:488px;top:323px;width:126px;height:38px;border-radius:6px;background:#fff;box-shadow:0 0 0 1px #dadada;"></div><svg style="left:498.5px;top:331.8px" width="21" height="20" viewBox="0 0 21 20" fill="none" stroke="#b2b2b2" stroke-width="1.6" stroke-linecap="butt"><path d="M0.8 0.4 L20.2 19.8 M20.2 0.4 L0.8 19.8"/></svg><svg style="left:530px;top:325px" width="40" height="34" viewBox="530 325 40 34" fill="none" stroke="#b2b2b2" stroke-width="1.6" stroke-linecap="butt" stroke-linejoin="miter"><path d="M537.9 340.9 L546.4 349.5 L564.3 332.1"/></svg><svg style="left:576px;top:324px" width="34" height="36" viewBox="576 324 34 36" fill="none" stroke="#333" stroke-linecap="round" stroke-linejoin="round">
<path d="M598.7 329.8 C597.6 328 595.5 328.1 594.1 330 C592.6 332.2 592 335.4 591.3 338.3 L588.7 348.6 C587.9 351.7 586.7 354.9 584.2 355.4 C583 355.6 582.2 355 581.9 354.2" stroke-width="2.3"/>
<circle cx="598.9" cy="330.3" r="1.25" fill="#333" stroke="none"/><circle cx="581.7" cy="353.9" r="1.35" fill="#333" stroke="none"/>
<path d="M587 335.9 H595.6" stroke-width="1.7" stroke-linecap="butt"/>
<path d="M595.5 341.4 C596.5 339.7 598.4 339.4 599 341.2 L601 348.2 C601.6 350.2 603 350.4 604.5 348.3" stroke-width="2.3"/>
<path d="M604.2 341 C602.9 340.3 602 341.6 600.6 343.6 L597.6 348 C596.4 349.8 595.5 350.6 594.3 350" stroke-width="1.2"/>
<circle cx="604.3" cy="341.1" r="1.05" fill="#333" stroke="none"/><circle cx="594.4" cy="349.9" r="1.05" fill="#333" stroke="none"/>
</svg><div class="a" style="left:623px;top:323px;width:1600px;height:38px;border-radius:6px;background:#fff;box-shadow:0 0 0 1px #dadada;"></div><div class="t" style="left:641.08px;top:332px;font-size:23px;line-height:23px;color:#242424;transform:scaleX(1.0113);">100314</div><div class="a" style="left:0;top:374px;width:2116px;height:780px;background:#fff;"></div><div class="a" style="left:1461px;top:389px;width:538px;height:2px;background:#9d9d9d;"></div><div class="a" style="left:1461px;top:389px;width:2px;height:6px;background:#9d9d9d;"></div><div class="a" style="left:1998px;top:375.5px;width:31px;height:31px;border:1px solid #9a9a9a;background:#e4e4e4;"></div><div class="a" style="left:2010px;top:391px;width:9px;height:2px;background:#444;"></div><div class="a" style="left:1500.6px;top:421px;width:2px;height:2px;background:#9a9a9a;"></div><div class="a" style="left:1584px;top:421px;width:2px;height:2px;background:#9a9a9a;"></div><div class="a" style="left:1691.7px;top:421px;width:2px;height:2px;background:#9a9a9a;"></div><div class="a" style="left:1794.5px;top:421px;width:2px;height:2px;background:#9a9a9a;"></div><div class="a" style="left:1892.8px;top:421px;width:2px;height:2px;background:#9a9a9a;"></div><div class="a" style="left:0;top:445px;width:2116px;height:1px;background:#d6d6d6;"></div><div class="a" style="left:355px;top:443px;width:126px;height:2px;background:#217346;"></div><div class="t" style="left:1966.15px;top:452px;font-size:22px;line-height:22px;color:#a3a3a3;font-style:italic;transform:scaleX(0.9115);">Reference</div><div class="t" style="left:121.46px;top:523px;font-size:32.5px;line-height:32.5px;color:#a3a3a6;font-weight:bold;transform:scaleX(0.9574);">Excel Table</div><div class="t" style="left:120.72px;top:566px;font-size:25px;line-height:25px;color:#a6a6a9;transform:scaleX(0.9391);">tblSampleData</div><div class="a" style="left:0;top:709px;width:2116px;height:1px;background:#9b9b9b;"></div><div class="a" style="left:354px;top:661px;width:1601px;height:500px;background:#000;"></div><div class="a" style="left:356px;top:663px;width:1597px;height:500px;background:#fff;"></div><div class="a" style="left:356px;top:663px;width:1103px;height:45px;background:#4472c4;"></div><div class="a" style="left:1459px;top:663px;width:494px;height:46px;background:#bfbfbf;"></div><div class="a" style="left:356px;top:708px;width:1103px;height:1.5px;background:#000;"></div><div class="a" style="left:949px;top:708px;width:138px;height:1.5px;background:#4472c4;"></div><div class="t" style="left:406.20px;top:677px;font-size:22.5px;line-height:22.5px;color:#fff;font-weight:bold;transform:scaleX(1.0845);">ID</div><div class="t" style="left:518.03px;top:677px;font-size:22.5px;line-height:22.5px;color:#fff;font-weight:bold;transform:scaleX(1.0441);">Date</div><div class="t" style="left:624.94px;top:677px;font-size:22.5px;line-height:22.5px;color:#fff;font-weight:bold;transform:scaleX(0.9746);">Location</div><div class="t" style="left:754.55px;top:677px;font-size:22.5px;line-height:22.5px;color:#fff;font-weight:bold;transform:scaleX(1.0127);">State</div><div class="t" style="left:851.87px;top:677px;font-size:22.5px;line-height:22.5px;color:#fff;font-weight:bold;transform:scaleX(0.9773);">Region</div><div class="t" style="left:995.23px;top:677px;font-size:22.5px;line-height:22.5px;color:#fff;font-weight:bold;transform:scaleX(0.9278);">Cost</div><div class="t" style="left:1116.09px;top:677px;font-size:22.5px;line-height:22.5px;color:#fff;font-weight:bold;transform:scaleX(0.9761);">Construction</div><div class="t" style="left:1299.02px;top:677px;font-size:22.5px;line-height:22.5px;color:#fff;font-weight:bold;transform:scaleX(0.9426);">BusinessType</div><div class="t" style="left:1465.07px;top:677px;font-size:22.5px;line-height:22.5px;color:#fff;font-weight:bold;transform:scaleX(1.1040);">Month</div><div class="t" style="left:1562.08px;top:677px;font-size:22.5px;line-height:22.5px;color:#fff;font-weight:bold;transform:scaleX(1.0093);">Year</div><div class="t" style="left:1631.74px;top:677px;font-size:22.5px;line-height:22.5px;color:#fff;font-weight:bold;transform:scaleX(1.0556);">MonthYear</div><div class="t" style="left:1766.51px;top:677px;font-size:22.5px;line-height:22.5px;color:#fff;font-weight:bold;transform:scaleX(1.0226);">Week</div><div class="t" style="left:1839.80px;top:677px;font-size:22.5px;line-height:22.5px;color:#fff;font-weight:bold;transform:scaleX(1.0212);">WeekYear</div><div class="band" style="top:709px;height:34px"></div><div class="rl" style="top:743px"></div><div class="t" style="left:360.30px;top:715px;font-size:23px;line-height:23px;color:#000;">100242</div><div class="t" style="left:498.30px;top:718px;font-size:22.5px;line-height:22.5px;color:#000;">01/02/21</div><div class="t" style="left:610.40px;top:715px;font-size:23px;line-height:23px;color:#000;">Urban</div><div class="t" style="left:739.30px;top:715px;font-size:23px;line-height:23px;color:#000;">NY</div><div class="t" style="left:833.30px;top:715px;font-size:23px;line-height:23px;color:#000;">East</div><div class="t" style="left:1004.36px;top:718px;font-size:22.5px;line-height:22.5px;color:#000;transform:scaleX(1.0300);">16,176</div><div class="t" style="left:1092.30px;top:715px;font-size:23px;line-height:23px;color:#000;">Frame</div><div class="t" style="left:1284.10px;top:715px;font-size:23px;line-height:23px;color:#000;">Retail</div><div class="t" style="left:1481.90px;top:715px;font-size:23px;line-height:23px;color:#000;">1</div><div class="t" style="left:1567.43px;top:715px;font-size:23px;line-height:23px;color:#000;">2021</div><div class="t" style="left:1630.40px;top:715px;font-size:23px;line-height:23px;color:#000;">1-2021</div><div class="t" style="left:1788.90px;top:715px;font-size:23px;line-height:23px;color:#000;">1</div><div class="t" style="left:1855.09px;top:715px;font-size:23px;line-height:23px;color:#000;">1-2021</div><div class="rl" style="top:777px"></div><div class="t" style="left:360.30px;top:749px;font-size:23px;line-height:23px;color:#000;">100314</div><div class="t" style="left:498.30px;top:752px;font-size:22.5px;line-height:22.5px;color:#000;">01/02/21</div><div class="t" style="left:610.40px;top:749px;font-size:23px;line-height:23px;color:#000;">Urban</div><div class="t" style="left:739.30px;top:749px;font-size:23px;line-height:23px;color:#000;">NY</div><div class="t" style="left:833.30px;top:749px;font-size:23px;line-height:23px;color:#000;">East</div><div class="t" style="left:1004.36px;top:752px;font-size:22.5px;line-height:22.5px;color:#000;transform:scaleX(1.0300);">13,018</div><div class="t" style="left:1092.30px;top:749px;font-size:23px;line-height:23px;color:#000;">Fire Resist</div><div class="t" style="left:1284.60px;top:749px;font-size:23px;line-height:23px;color:#000;transform:scaleX(0.9678);">Apartment</div><div class="t" style="left:1481.90px;top:749px;font-size:23px;line-height:23px;color:#000;">1</div><div class="t" style="left:1567.43px;top:749px;font-size:23px;line-height:23px;color:#000;">2021</div><div class="t" style="left:1630.40px;top:749px;font-size:23px;line-height:23px;color:#000;">1-2021</div><div class="t" style="left:1788.90px;top:749px;font-size:23px;line-height:23px;color:#000;">1</div><div class="t" style="left:1855.09px;top:749px;font-size:23px;line-height:23px;color:#000;">1-2021</div><div class="band" style="top:778px"></div><div class="rl" style="top:811px"></div><div class="t" style="left:360.30px;top:783px;font-size:23px;line-height:23px;color:#000;">100359</div><div class="t" style="left:498.30px;top:786px;font-size:22.5px;line-height:22.5px;color:#000;">01/02/21</div><div class="t" style="left:610.30px;top:783px;font-size:23px;line-height:23px;color:#000;">Rural</div><div class="t" style="left:739.00px;top:783px;font-size:23px;line-height:23px;color:#000;">WI</div><div class="t" style="left:833.32px;top:783px;font-size:23px;line-height:23px;color:#000;transform:scaleX(0.9895);">Midwest</div><div class="t" style="left:1017.25px;top:786px;font-size:22.5px;line-height:22.5px;color:#000;transform:scaleX(1.0300);">2,053</div><div class="t" style="left:1092.30px;top:783px;font-size:23px;line-height:23px;color:#000;">Frame</div><div class="t" style="left:1284.09px;top:783px;font-size:23px;line-height:23px;color:#000;">Farming</div><div class="t" style="left:1481.90px;top:783px;font-size:23px;line-height:23px;color:#000;">1</div><div class="t" style="left:1567.43px;top:783px;font-size:23px;line-height:23px;color:#000;">2021</div><div class="t" style="left:1630.40px;top:783px;font-size:23px;line-height:23px;color:#000;">1-2021</div><div class="t" style="left:1788.90px;top:783px;font-size:23px;line-height:23px;color:#000;">1</div><div class="t" style="left:1855.09px;top:783px;font-size:23px;line-height:23px;color:#000;">1-2021</div><div class="rl" style="top:845px"></div><div class="t" style="left:360.30px;top:817px;font-size:23px;line-height:23px;color:#000;">100315</div><div class="t" style="left:498.30px;top:820px;font-size:22.5px;line-height:22.5px;color:#000;">01/03/21</div><div class="t" style="left:610.40px;top:817px;font-size:23px;line-height:23px;color:#000;">Urban</div><div class="t" style="left:739.30px;top:817px;font-size:23px;line-height:23px;color:#000;">NY</div><div class="t" style="left:833.30px;top:817px;font-size:23px;line-height:23px;color:#000;">East</div><div class="t" style="left:1004.25px;top:820px;font-size:22.5px;line-height:22.5px;color:#000;transform:scaleX(1.0300);">26,370</div><div class="t" style="left:1092.30px;top:817px;font-size:23px;line-height:23px;color:#000;">Frame</div><div class="t" style="left:1284.60px;top:817px;font-size:23px;line-height:23px;color:#000;transform:scaleX(0.9678);">Apartment</div><div class="t" style="left:1481.90px;top:817px;font-size:23px;line-height:23px;color:#000;">1</div><div class="t" style="left:1567.43px;top:817px;font-size:23px;line-height:23px;color:#000;">2021</div><div class="t" style="left:1630.40px;top:817px;font-size:23px;line-height:23px;color:#000;">1-2021</div><div class="t" style="left:1789.20px;top:817px;font-size:23px;line-height:23px;color:#000;">2</div><div class="t" style="left:1855.39px;top:817px;font-size:23px;line-height:23px;color:#000;">2-2021</div><div class="band" style="top:846px"></div><div class="rl" style="top:879px"></div><div class="t" style="left:360.30px;top:851px;font-size:23px;line-height:23px;color:#000;">100385</div><div class="t" style="left:498.30px;top:854px;font-size:22.5px;line-height:22.5px;color:#000;">01/03/21</div><div class="t" style="left:610.40px;top:851px;font-size:23px;line-height:23px;color:#000;">Urban</div><div class="t" style="left:739.30px;top:851px;font-size:23px;line-height:23px;color:#000;">NY</div><div class="t" style="left:833.30px;top:851px;font-size:23px;line-height:23px;color:#000;">East</div><div class="t" style="left:1004.25px;top:854px;font-size:22.5px;line-height:22.5px;color:#000;transform:scaleX(1.0300);">19,250</div><div class="t" style="left:1092.30px;top:851px;font-size:23px;line-height:23px;color:#000;">Masonry</div><div class="t" style="left:1284.11px;top:851px;font-size:23px;line-height:23px;color:#000;transform:scaleX(0.9924);">Hospitality</div><div class="t" style="left:1481.90px;top:851px;font-size:23px;line-height:23px;color:#000;">1</div><div class="t" style="left:1567.43px;top:851px;font-size:23px;line-height:23px;color:#000;">2021</div><div class="t" style="left:1630.40px;top:851px;font-size:23px;line-height:23px;color:#000;">1-2021</div><div class="t" style="left:1789.20px;top:851px;font-size:23px;line-height:23px;color:#000;">2</div><div class="t" style="left:1855.39px;top:851px;font-size:23px;line-height:23px;color:#000;">2-2021</div><div class="rl" style="top:913px"></div><div class="t" style="left:360.30px;top:885px;font-size:23px;line-height:23px;color:#000;">100388</div><div class="t" style="left:498.30px;top:888px;font-size:22.5px;line-height:22.5px;color:#000;">01/04/21</div><div class="t" style="left:610.40px;top:885px;font-size:23px;line-height:23px;color:#000;">Urban</div><div class="t" style="left:739.00px;top:885px;font-size:23px;line-height:23px;color:#000;">IL</div><div class="t" style="left:833.32px;top:885px;font-size:23px;line-height:23px;color:#000;transform:scaleX(0.9895);">Midwest</div><div class="t" style="left:1004.56px;top:888px;font-size:22.5px;line-height:22.5px;color:#000;transform:scaleX(1.0300);">19,402</div><div class="t" style="left:1092.30px;top:885px;font-size:23px;line-height:23px;color:#000;">Frame</div><div class="t" style="left:1284.60px;top:885px;font-size:23px;line-height:23px;color:#000;transform:scaleX(0.9678);">Apartment</div><div class="t" style="left:1481.90px;top:885px;font-size:23px;line-height:23px;color:#000;">1</div><div class="t" style="left:1567.43px;top:885px;font-size:23px;line-height:23px;color:#000;">2021</div><div class="t" style="left:1630.40px;top:885px;font-size:23px;line-height:23px;color:#000;">1-2021</div><div class="t" style="left:1789.20px;top:885px;font-size:23px;line-height:23px;color:#000;">2</div><div class="t" style="left:1855.39px;top:885px;font-size:23px;line-height:23px;color:#000;">2-2021</div><div class="band" style="top:914px"></div><div class="rl" style="top:947px"></div><div class="t" style="left:360.30px;top:919px;font-size:23px;line-height:23px;color:#000;">100358</div><div class="t" style="left:498.30px;top:922px;font-size:22.5px;line-height:22.5px;color:#000;">01/05/21</div><div class="t" style="left:610.40px;top:919px;font-size:23px;line-height:23px;color:#000;">Urban</div><div class="t" style="left:739.00px;top:919px;font-size:23px;line-height:23px;color:#000;">WI</div><div class="t" style="left:833.32px;top:919px;font-size:23px;line-height:23px;color:#000;transform:scaleX(0.9895);">Midwest</div><div class="t" style="left:1036.57px;top:922px;font-size:22.5px;line-height:22.5px;color:#000;transform:scaleX(1.0300);">348</div><div class="t" style="left:1092.30px;top:919px;font-size:23px;line-height:23px;color:#000;">Masonry</div><div class="t" style="left:1284.50px;top:919px;font-size:23px;line-height:23px;color:#000;transform:scaleX(1.0047);">Office Bldg</div><div class="t" style="left:1481.90px;top:919px;font-size:23px;line-height:23px;color:#000;">1</div><div class="t" style="left:1567.43px;top:919px;font-size:23px;line-height:23px;color:#000;">2021</div><div class="t" style="left:1630.40px;top:919px;font-size:23px;line-height:23px;color:#000;">1-2021</div><div class="t" style="left:1789.20px;top:919px;font-size:23px;line-height:23px;color:#000;">2</div><div class="t" style="left:1855.39px;top:919px;font-size:23px;line-height:23px;color:#000;">2-2021</div><div class="rl" style="top:981px"></div><div class="t" style="left:360.30px;top:953px;font-size:23px;line-height:23px;color:#000;">100264</div><div class="t" style="left:498.30px;top:956px;font-size:22.5px;line-height:22.5px;color:#000;">01/07/21</div><div class="t" style="left:610.30px;top:953px;font-size:23px;line-height:23px;color:#000;">Rural</div><div class="t" style="left:739.30px;top:953px;font-size:23px;line-height:23px;color:#000;">NY</div><div class="t" style="left:833.30px;top:953px;font-size:23px;line-height:23px;color:#000;">East</div><div class="t" style="left:1017.14px;top:956px;font-size:22.5px;line-height:22.5px;color:#000;transform:scaleX(1.0300);">2,220</div><div class="t" style="left:1092.30px;top:953px;font-size:23px;line-height:23px;color:#000;">Frame</div><div class="t" style="left:1284.09px;top:953px;font-size:23px;line-height:23px;color:#000;">Farming</div><div class="t" style="left:1481.90px;top:953px;font-size:23px;line-height:23px;color:#000;">1</div><div class="t" style="left:1567.43px;top:953px;font-size:23px;line-height:23px;color:#000;">2021</div><div class="t" style="left:1630.40px;top:953px;font-size:23px;line-height:23px;color:#000;">1-2021</div><div class="t" style="left:1789.20px;top:953px;font-size:23px;line-height:23px;color:#000;">2</div><div class="t" style="left:1855.39px;top:953px;font-size:23px;line-height:23px;color:#000;">2-2021</div><div class="band" style="top:982px"></div><div class="rl" style="top:1015px"></div><div class="t" style="left:360.30px;top:987px;font-size:23px;line-height:23px;color:#000;">100265</div><div class="t" style="left:498.30px;top:990px;font-size:22.5px;line-height:22.5px;color:#000;">01/07/21</div><div class="t" style="left:610.40px;top:987px;font-size:23px;line-height:23px;color:#000;">Urban</div><div class="t" style="left:739.30px;top:987px;font-size:23px;line-height:23px;color:#000;">NY</div><div class="t" style="left:833.30px;top:987px;font-size:23px;line-height:23px;color:#000;">East</div><div class="t" style="left:1004.25px;top:990px;font-size:22.5px;line-height:22.5px;color:#000;transform:scaleX(1.0300);">21,150</div><div class="t" style="left:1092.30px;top:987px;font-size:23px;line-height:23px;color:#000;">Frame</div><div class="t" style="left:1284.60px;top:987px;font-size:23px;line-height:23px;color:#000;transform:scaleX(0.9678);">Apartment</div><div class="t" style="left:1481.90px;top:987px;font-size:23px;line-height:23px;color:#000;">1</div><div class="t" style="left:1567.43px;top:987px;font-size:23px;line-height:23px;color:#000;">2021</div><div class="t" style="left:1630.40px;top:987px;font-size:23px;line-height:23px;color:#000;">1-2021</div><div class="t" style="left:1789.20px;top:987px;font-size:23px;line-height:23px;color:#000;">2</div><div class="t" style="left:1855.39px;top:987px;font-size:23px;line-height:23px;color:#000;">2-2021</div><div class="rl" style="top:1049px"></div><div class="t" style="left:360.30px;top:1021px;font-size:23px;line-height:23px;color:#000;">100357</div><div class="t" style="left:498.30px;top:1024px;font-size:22.5px;line-height:22.5px;color:#000;">01/08/21</div><div class="t" style="left:610.40px;top:1021px;font-size:23px;line-height:23px;color:#000;">Urban</div><div class="t" style="left:739.30px;top:1021px;font-size:23px;line-height:23px;color:#000;">NY</div><div class="t" style="left:833.30px;top:1021px;font-size:23px;line-height:23px;color:#000;">East</div><div class="t" style="left:991.57px;top:1024px;font-size:22.5px;line-height:22.5px;color:#000;transform:scaleX(1.0300);">714,421</div><div class="t" style="left:1092.30px;top:1021px;font-size:23px;line-height:23px;color:#000;">Masonry</div><div class="t" style="left:1284.50px;top:1021px;font-size:23px;line-height:23px;color:#000;">Other</div><div class="t" style="left:1481.90px;top:1021px;font-size:23px;line-height:23px;color:#000;">1</div><div class="t" style="left:1567.43px;top:1021px;font-size:23px;line-height:23px;color:#000;">2021</div><div class="t" style="left:1630.40px;top:1021px;font-size:23px;line-height:23px;color:#000;">1-2021</div><div class="t" style="left:1789.20px;top:1021px;font-size:23px;line-height:23px;color:#000;">2</div><div class="t" style="left:1855.39px;top:1021px;font-size:23px;line-height:23px;color:#000;">2-2021</div><div class="band" style="top:1050px"></div><div class="rl" style="top:1083px"></div><div class="t" style="left:360.30px;top:1055px;font-size:23px;line-height:23px;color:#000;">100399</div><div class="t" style="left:498.30px;top:1058px;font-size:22.5px;line-height:22.5px;color:#000;">01/08/21</div><div class="t" style="left:610.40px;top:1055px;font-size:23px;line-height:23px;color:#000;">Urban</div><div class="t" style="left:739.30px;top:1055px;font-size:23px;line-height:23px;color:#000;">NY</div><div class="t" style="left:833.30px;top:1055px;font-size:23px;line-height:23px;color:#000;">East</div><div class="t" style="left:1004.36px;top:1058px;font-size:22.5px;line-height:22.5px;color:#000;transform:scaleX(1.0300);">20,888</div><div class="t" style="left:1092.30px;top:1055px;font-size:23px;line-height:23px;color:#000;">Frame</div><div class="t" style="left:1284.60px;top:1055px;font-size:23px;line-height:23px;color:#000;transform:scaleX(0.9678);">Apartment</div><div class="t" style="left:1481.90px;top:1055px;font-size:23px;line-height:23px;color:#000;">1</div><div class="t" style="left:1567.43px;top:1055px;font-size:23px;line-height:23px;color:#000;">2021</div><div class="t" style="left:1630.40px;top:1055px;font-size:23px;line-height:23px;color:#000;">1-2021</div><div class="t" style="left:1789.20px;top:1055px;font-size:23px;line-height:23px;color:#000;">2</div><div class="t" style="left:1855.39px;top:1055px;font-size:23px;line-height:23px;color:#000;">2-2021</div><div class="rl" style="top:1117px"></div><div class="t" style="left:360.30px;top:1089px;font-size:23px;line-height:23px;color:#000;">100329</div><div class="t" style="left:498.30px;top:1092px;font-size:22.5px;line-height:22.5px;color:#000;">01/09/21</div><div class="t" style="left:610.40px;top:1089px;font-size:23px;line-height:23px;color:#000;">Urban</div><div class="t" style="left:739.30px;top:1089px;font-size:23px;line-height:23px;color:#000;">NY</div><div class="t" style="left:833.30px;top:1089px;font-size:23px;line-height:23px;color:#000;">East</div><div class="t" style="left:1017.25px;top:1092px;font-size:22.5px;line-height:22.5px;color:#000;transform:scaleX(1.0300);">9,525</div><div class="t" style="left:1092.30px;top:1089px;font-size:23px;line-height:23px;color:#000;">Frame</div><div class="t" style="left:1284.60px;top:1089px;font-size:23px;line-height:23px;color:#000;transform:scaleX(0.9678);">Apartment</div><div class="t" style="left:1481.90px;top:1089px;font-size:23px;line-height:23px;color:#000;">1</div><div class="t" style="left:1567.43px;top:1089px;font-size:23px;line-height:23px;color:#000;">2021</div><div class="t" style="left:1630.40px;top:1089px;font-size:23px;line-height:23px;color:#000;">1-2021</div><div class="t" style="left:1789.20px;top:1089px;font-size:23px;line-height:23px;color:#000;">2</div><div class="t" style="left:1855.39px;top:1089px;font-size:23px;line-height:23px;color:#000;">2-2021</div><div class="band" style="top:1118px"></div><div class="rl" style="top:1151px"></div><div class="t" style="left:360.30px;top:1123px;font-size:23px;line-height:23px;color:#000;">100429</div><div class="t" style="left:498.30px;top:1126px;font-size:22.5px;line-height:22.5px;color:#000;">01/09/21</div><div class="t" style="left:610.40px;top:1123px;font-size:23px;line-height:23px;color:#000;">Urban</div><div class="t" style="left:739.00px;top:1123px;font-size:23px;line-height:23px;color:#000;">WI</div><div class="t" style="left:833.32px;top:1123px;font-size:23px;line-height:23px;color:#000;transform:scaleX(0.9895);">Midwest</div><div class="t" style="left:991.37px;top:1126px;font-size:22.5px;line-height:22.5px;color:#000;transform:scaleX(1.0300);">605,400</div><div class="t" style="left:1092.30px;top:1123px;font-size:23px;line-height:23px;color:#000;">Masonry</div><div class="t" style="left:1284.10px;top:1123px;font-size:23px;line-height:23px;color:#000;">Medical</div><div class="t" style="left:1481.90px;top:1123px;font-size:23px;line-height:23px;color:#000;">1</div><div class="t" style="left:1567.43px;top:1123px;font-size:23px;line-height:23px;color:#000;">2021</div><div class="t" style="left:1630.40px;top:1123px;font-size:23px;line-height:23px;color:#000;">1-2021</div><div class="t" style="left:1789.20px;top:1123px;font-size:23px;line-height:23px;color:#000;">2</div><div class="t" style="left:1855.39px;top:1123px;font-size:23px;line-height:23px;color:#000;">2-2021</div><div class="a" style="left:1460px;top:709px;width:493px;height:1px;background:#a9a9a9;"></div><div class="a" style="left:1458px;top:709px;width:2px;height:460px;background:#000;"></div><div class="a" style="left:354px;top:742px;width:124px;height:33px;border:2px solid #217346;"></div><div class="a" style="left:475px;top:772.5px;width:6.8px;height:6.5px;background:#217346;border:1px solid #fff;"></div>
</body>
</html>
